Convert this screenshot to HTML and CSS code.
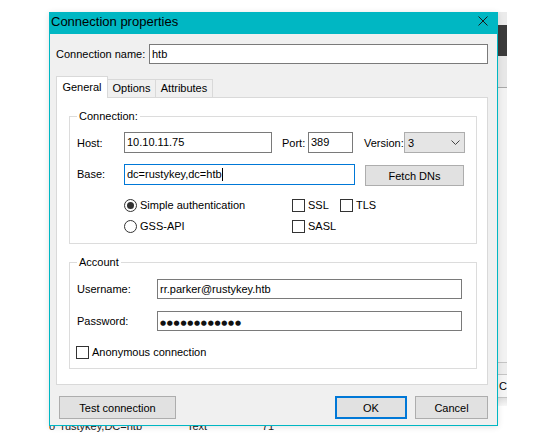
FILE: index.html
```html
<!DOCTYPE html>
<html>
<head>
<meta charset="utf-8">
<title>Connection properties</title>
<link rel="stylesheet" href="styles.css">
</head>
<body>
<div class="desktop">
  <div class="bgwin">
    <div class="bg-title"></div>
    <div class="bg-toolbar"></div>
    <div class="bg-header"></div>
    <div class="bg-list"></div>
    <div class="bg-row-thin"></div>
    <div class="bg-row-c">C</div>
    <div class="bg-shadow"></div>
    <div class="bg-gap"></div>
    <div class="bg-row-text"><span class="c1">o&nbsp;&nbsp;rustykey,DC=htb</span><span class="c2">Text</span><span class="c3">71</span></div>
  </div>

  <div class="dialog">
    <div class="titlebar">
      <span class="title">Connection properties</span>
      <svg class="close" width="10" height="10" viewBox="0 0 10 10"><path d="M0.5 0.5L9.5 9.5M9.5 0.5L0.5 9.5" stroke="#1a1a1a" stroke-width="1" fill="none"/></svg>
    </div>
    <div class="body">
      <div class="name-row">
        <span class="name-lbl">Connection name:</span>
        <div class="field grow">htb</div>
      </div>

      <div class="tabs">
        <div class="tab active t-general">General</div>
        <div class="tab t-options">Options</div>
        <div class="tab t-attr">Attributes</div>
      </div>

      <div class="panel">
        <div class="group conn">
          <span class="legend">Connection:</span>
          <div class="row r1">
            <span class="lbl-host">Host:</span>
            <div class="field f21 host">10.10.11.75</div>
            <span class="port-lbl">Port:</span>
            <div class="field f21 port">389</div>
            <span class="ver-lbl">Version:</span>
            <div class="select"><span>3</span><svg width="9" height="5" viewBox="0 0 9 5"><path d="M0.5 0.5L4.5 4.5L8.5 0.5" stroke="#444" stroke-width="1" fill="none"/></svg></div>
          </div>
          <div class="row r2">
            <span class="lbl-host">Base:</span>
            <div class="field f21 base">dc=rustykey,dc=htb<span class="caret"></span></div>
            <div class="btn fetch">Fetch DNs</div>
          </div>
          <div class="row r3">
            <span class="lbl-host"></span>
            <div class="opt radio-col"><span class="radio checked"></span><span>Simple authentication</span></div>
            <div class="opt ssl"><span class="check"></span><span>SSL</span></div>
            <div class="opt"><span class="check"></span><span>TLS</span></div>
          </div>
          <div class="row r4">
            <span class="lbl-host"></span>
            <div class="opt radio-col"><span class="radio"></span><span>GSS-API</span></div>
            <div class="opt"><span class="check"></span><span>SASL</span></div>
          </div>
        </div>

        <div class="group acct">
          <span class="legend">Account</span>
          <div class="row a1">
            <span class="lbl-acct">Username:</span>
            <div class="field acct-field">rr.parker@rustykey.htb</div>
          </div>
          <div class="row a2">
            <span class="lbl-acct">Password:</span>
            <div class="field acct-field"><span class="dots">●●●●●●●●●●●●</span></div>
          </div>
          <div class="row a3">
            <div class="opt anon"><span class="check"></span><span>Anonymous connection</span></div>
          </div>
        </div>
      </div>

      <div class="buttons">
        <div class="btn test">Test connection</div>
        <div class="btn ok">OK</div>
        <div class="btn cancel">Cancel</div>
      </div>
    </div>
  </div>
</div>
</body>
</html>
```

FILE: styles.css
```css
* { box-sizing: border-box; }

html, body {
  margin: 0;
  padding: 0;
  background: #fff;
}

body {
  width: 539px;
  height: 446px;
  overflow: hidden;
  font-family: "Liberation Sans", Arial, sans-serif;
  font-size: 11px;
  color: #000;
}

.desktop {
  position: relative;
  width: 539px;
  height: 446px;
}

/* background window peeking out behind the dialog */
.bgwin {
  position: absolute;
  left: 49px;
  top: 12px;
  width: 458px;
  height: 422px;
  overflow: hidden;
  background: #fff;
  display: flex;
  flex-direction: column;
}
.bgwin > div { flex: none; }
.bg-title { height: 13px; background: #ebebeb; }
.bg-toolbar { height: 31px; background: #3b3b3b; }
.bg-header { height: 32px; background: #e7e7e7; border-bottom: 1px solid #a8a8a8; }
.bg-list { height: 274px; background: #f2f2f2; }
.bg-row-thin { height: 12px; border-top: 1px solid #c4c4c4; background: #ededed; }
.bg-row-c {
  height: 23px;
  border-top: 1px solid #c4c4c4;
  background: #f5f5f5;
  padding-left: 450px;
  line-height: 22px;
  font-size: 11px;
  white-space: nowrap;
}
.bg-shadow { height: 9px; border-top: 1px solid #c4c4c4; background: linear-gradient(#e0e0e0, #f7f7f7); }
.bg-gap { height: 13px; }
.bg-row-text {
  height: 15px;
  line-height: 14px;
  font-size: 11px;
  display: flex;
  color: #222;
  white-space: nowrap;
}
.c1 { width: 138px; }
.c2 { width: 75px; }

/* dialog */
.dialog {
  position: absolute;
  left: 49px;
  top: 12px;
  width: 449px;
  border: 1px solid #00b7c3;
  background: #f0f0f0;
  box-shadow: 0 1px 6px rgba(0, 0, 0, 0.12);
}

.titlebar {
  height: 21px;
  background: #00b7c3;
  display: flex;
  justify-content: space-between;
  align-items: flex-start;
  padding: 0 9px 0 1px;
}
.title {
  font-size: 13px;
  line-height: 17px;
  color: #000;
}
.close { margin-top: 3px; }

.body { padding: 10px 9px 6px 6px; }

.name-row {
  display: flex;
  align-items: center;
  height: 20px;
}
.name-lbl { width: 93px; flex: none; }

.field {
  background: #fff;
  border: 1px solid #7a7a7a;
  height: 20px;
  line-height: 18px;
  padding: 0 2px;
  white-space: nowrap;
  flex: none;
}
.grow { flex: 1; }
.f21 { height: 21px; line-height: 19px; }

.tabs {
  display: flex;
  align-items: flex-end;
  height: 21px;
  margin-top: 12px;
}
.tab {
  height: 18px;
  border: 1px solid #d9d9d9;
  border-bottom: none;
  background: #f0f0f0;
  line-height: 17px;
  text-align: center;
  margin-left: -1px;
}
.tab.active {
  height: 22px;
  margin-bottom: -1px;
  margin-left: 0;
  background: #fff;
  position: relative;
  z-index: 1;
  line-height: 20px;
}
.t-general { width: 52px; }
.t-options { width: 49px; }
.t-attr { width: 58px; }

.panel {
  background: #fff;
  border: 1px solid #d9d9d9;
  padding: 18px 10px 15px 12px;
}

.group {
  border: 1px solid #dcdcdc;
  padding: 0 0 10px 7px;
}
.acct {
  margin-top: 18px;
  padding-bottom: 9px;
}
.legend {
  display: block;
  width: fit-content;
  margin-top: -8px;
  padding: 0 2px;
  line-height: 14px;
  background: #fff;
}

.row {
  display: flex;
  align-items: center;
}
.r1 { margin-top: 9px; height: 21px; }
.r2 { margin-top: 11px; height: 21px; align-items: flex-start; }
.r3 { margin-top: 13px; height: 14px; }
.r4 { margin-top: 7px; height: 14px; }

.lbl-host { width: 47px; flex: none; }
.r2 .lbl-host { line-height: 21px; }
.host { width: 148px; }
.port-lbl { margin-left: 10px; width: 26px; flex: none; }
.port { width: 45px; }
.ver-lbl { margin-left: 11px; width: 40px; flex: none; }
.select {
  width: 61px;
  height: 21px;
  background: #e5e5e5;
  border: 1px solid #adadad;
  display: flex;
  align-items: center;
  justify-content: space-between;
  padding: 0 4px 0 3px;
}
.base { width: 231px; border-color: #0078d7; }
.caret {
  display: inline-block;
  width: 1px;
  height: 13px;
  background: #000;
  vertical-align: -3px;
}

.btn {
  background: #e1e1e1;
  border: 1px solid #adadad;
  display: flex;
  align-items: center;
  justify-content: center;
  flex: none;
}
.fetch {
  margin-left: 10px;
  margin-top: 1px;
  width: 99px;
  height: 21px;
}

.opt {
  display: flex;
  align-items: center;
  gap: 3px;
  white-space: nowrap;
}
.radio-col { width: 168px; flex: none; }
.ssl { width: 48px; flex: none; }
.radio {
  width: 13px;
  height: 13px;
  border: 1px solid #333;
  border-radius: 50%;
  background: #fff;
  display: flex;
  align-items: center;
  justify-content: center;
  flex: none;
}
.radio.checked::after {
  content: "";
  width: 7px;
  height: 7px;
  border-radius: 50%;
  background: #333;
}
.check {
  width: 13px;
  height: 13px;
  border: 1px solid #333;
  background: #fff;
  flex: none;
}

.a1 { margin-top: 10px; height: 20px; }
.a2 { margin-top: 12px; height: 20px; }
.a3 { margin-top: 14px; height: 14px; }
.lbl-acct { width: 80px; flex: none; }
.acct-field { width: 305px; }
.anon { margin-left: -1px; }
.dots {
  font-family: "DejaVu Sans", sans-serif;
  font-size: 7px;
  letter-spacing: 0.7px;
  color: #111;
}

.buttons {
  display: flex;
  margin-top: 11px;
  height: 23px;
  gap: 8px;
}
.test { margin-left: 3px; width: 117px; margin-right: auto; }
.ok { width: 72px; border: 2px solid #0078d7; }
.cancel { width: 73px; }
```
